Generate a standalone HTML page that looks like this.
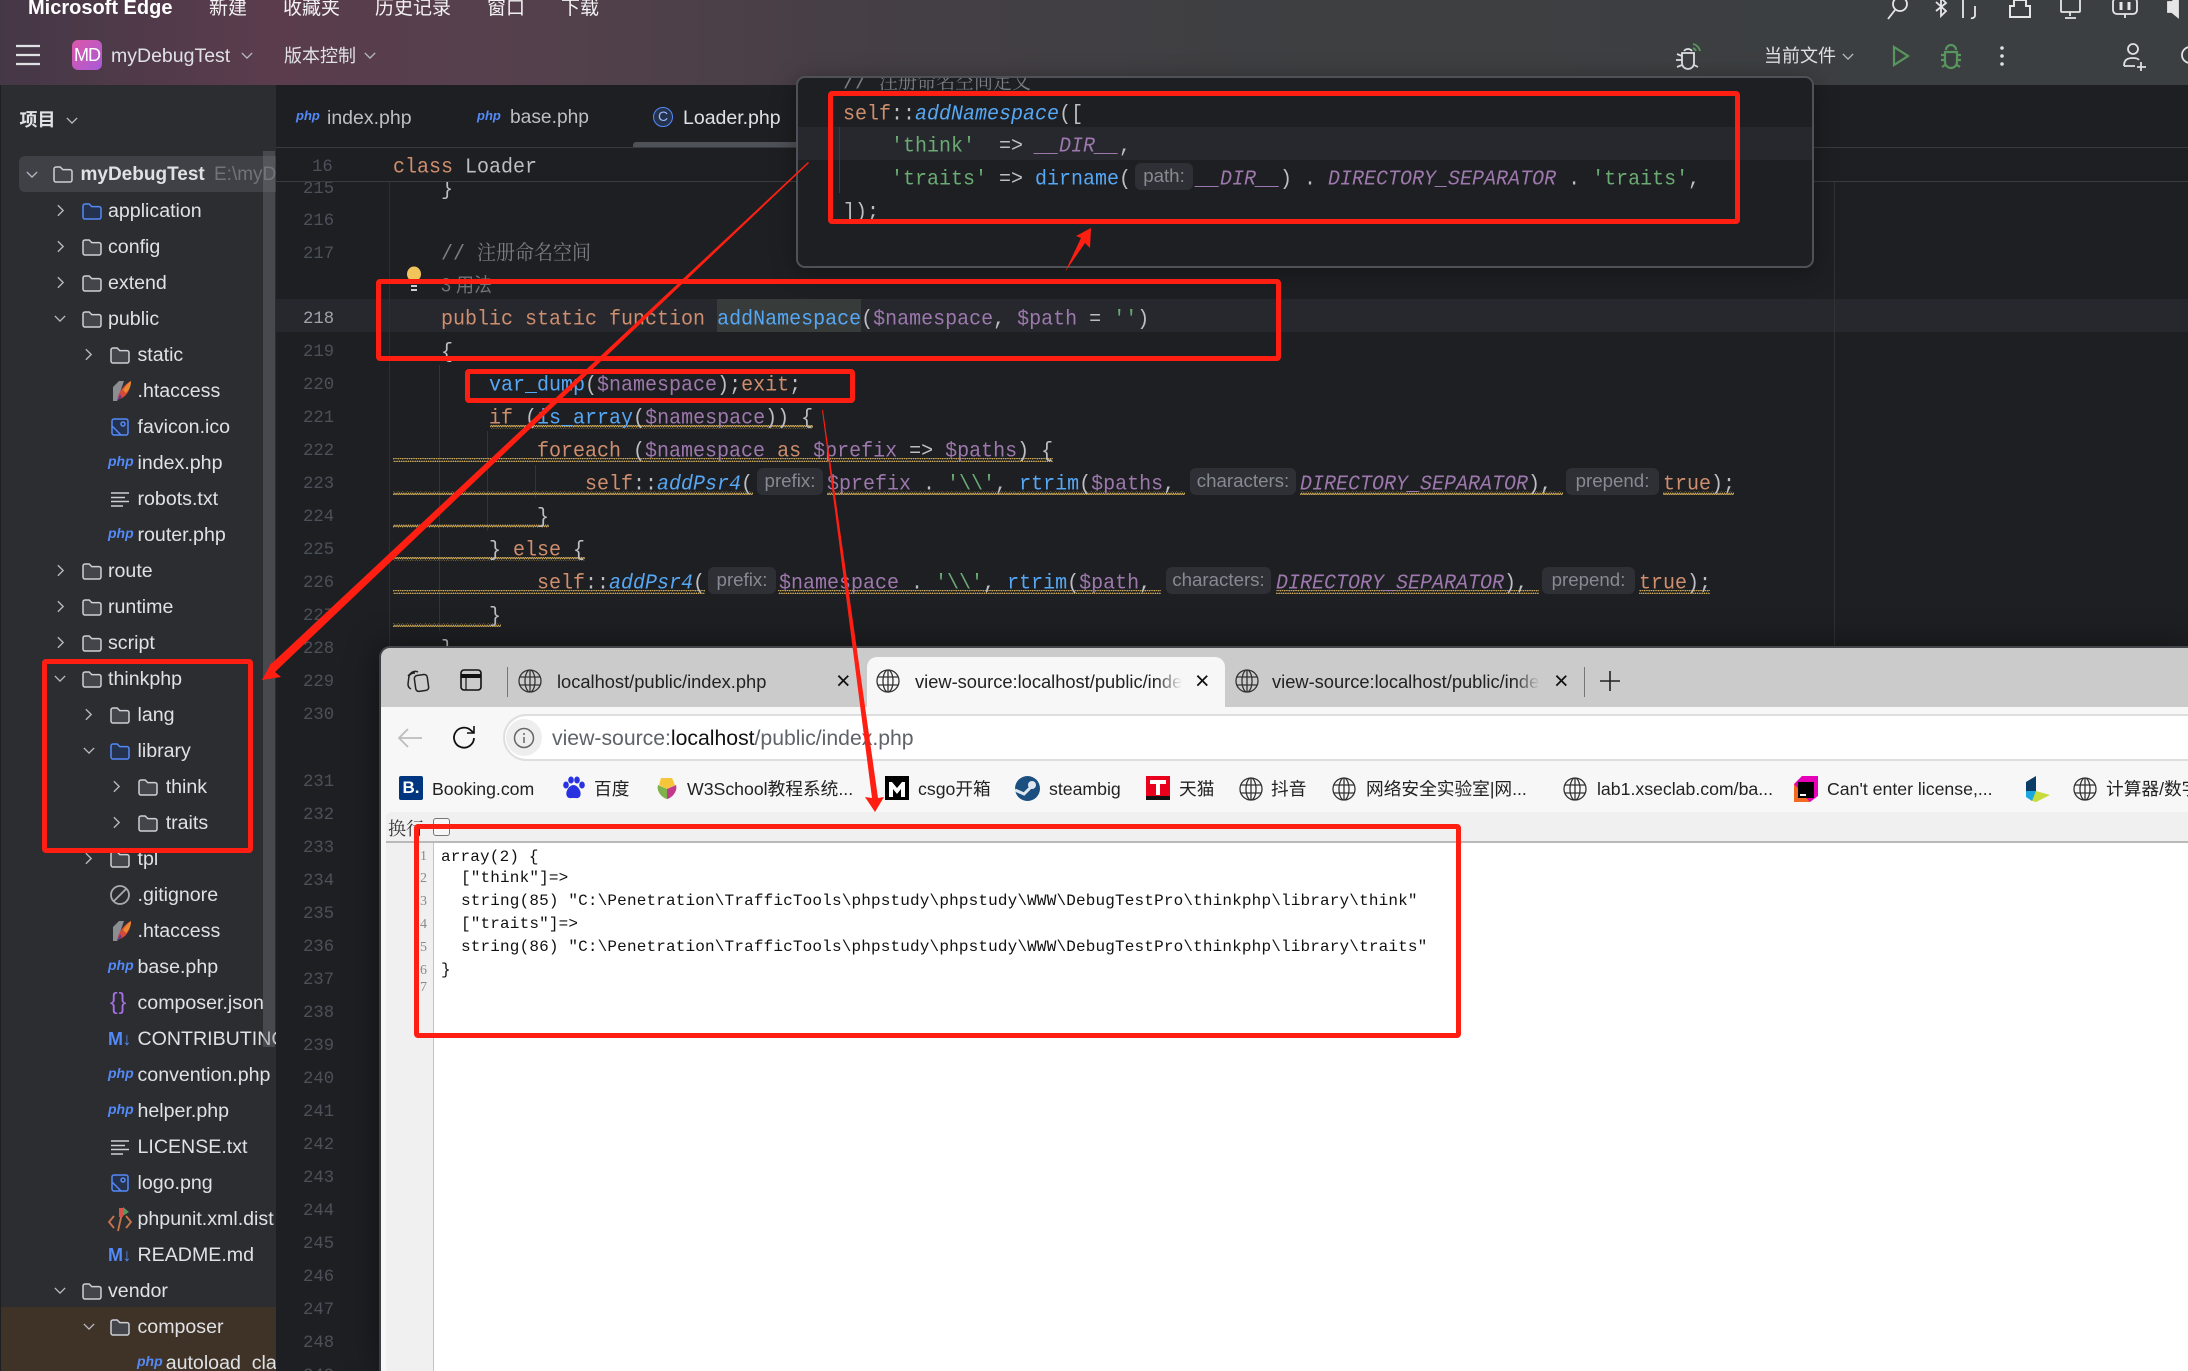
<!DOCTYPE html>
<html lang="zh">
<head>
<meta charset="utf-8">
<title>myDebugTest</title>
<style>
html,body{margin:0;padding:0;background:#1e1f22;width:2188px;height:1371px;overflow:hidden}
body{position:relative;font-family:"Liberation Sans","Noto Sans CJK SC",sans-serif}
#root{position:absolute;left:0;top:0;width:2188px;height:1371px;overflow:hidden}
.a{position:absolute}
.x{position:absolute;white-space:pre;line-height:1}
svg{position:absolute;overflow:visible}
.fo{fill:#43454a;stroke:#ced0d6;stroke-width:1.5}
.fb{fill:#25324d;stroke:#548af7;stroke-width:1.5}
.ch{fill:none;stroke:#b4b8bf;stroke-width:1.6}
.r{position:absolute;left:0;width:276px;height:36px}
.r span{position:absolute;top:0;font-size:19.6px;line-height:36px;color:#dfe1e5;white-space:pre}
.t2{left:108px}.t3{left:137.5px}.t4{left:165.7px}
.r .p{font:italic bold 14px/36px "Liberation Sans",sans-serif;color:#548af7;top:-2px}
.r .md{font:bold 18px/36px "Liberation Sans",sans-serif;color:#548af7;left:108px;letter-spacing:-.5px}
.c{position:absolute;font:20px/33px "Liberation Mono",monospace;white-space:pre;color:#bcbec4;height:33px;margin-top:3px;transform:scaleY(1.08)}
.n{position:absolute;left:303px;font:17.3px/33px "Liberation Mono",monospace;color:#4b5059;height:33px;margin-top:3px}
.k{color:#cf8e6d}.f{color:#56a8f5}.v{color:#9d78ad}.s{color:#6aab73}
.fi{color:#56a8f5;font-style:italic}.d{color:#9d78ad;font-style:italic}
.h{position:absolute;background:#2e3035;border-radius:6px;color:#868a91;font:18.7px/25px "Liberation Sans",sans-serif;text-align:center;height:27px;white-space:pre}
.rb{position:absolute;border:5px solid #fe1f12;border-radius:4px;box-sizing:border-box}
.b{position:absolute;white-space:pre;font-size:17.7px;line-height:24px;color:#222}
.src{position:absolute;left:441px;font:16px/20px "Liberation Mono","Noto Serif CJK SC",monospace;color:#111;white-space:pre;letter-spacing:.16px}
.ln{position:absolute;left:420px;font:14px/14px "Liberation Serif",serif;color:#8a8a8a}
</style>
</head>
<body>
<div id="root">
<svg width="0" height="0" style="position:absolute">
<defs>
<symbol id="fold" viewBox="0 0 20 18"><path d="M1 4a2 2 0 0 1 2-2h4.2l2.6 2.6H17a2 2 0 0 1 2 2V15a2 2 0 0 1-2 2H3a2 2 0 0 1-2-2z"/></symbol>
<symbol id="cr" viewBox="0 0 8 14"><path d="M1 1l6 6-6 6"/></symbol>
<symbol id="cd" viewBox="0 0 14 8"><path d="M1 1l6 6 6-6"/></symbol>
<symbol id="globe" viewBox="0 0 24 24"><g fill="none" stroke="#333" stroke-width="1.3"><circle cx="12" cy="12" r="11"/><ellipse cx="12" cy="12" rx="5" ry="11"/><path d="M12 1v22M2 8h20M2 16h20"/></g></symbol>
<symbol id="feather" viewBox="0 0 20 22"><path d="M1 7l6-6h5L5 21H1z" fill="#8a8d91"/><path d="M5 21C6 13 11 5 19 1c0 8-5 17-12 18z" fill="#d64a3a"/><path d="M11 10C13 7 16 3 19 1c0 5-2 9-5 12z" fill="#e98a2f"/><path d="M5 21c1-3 2-5 3-7l2 3z" fill="#6b3b8c"/></symbol>
<symbol id="img" viewBox="0 0 18 18"><g fill="none" stroke="#548af7" stroke-width="1.5"><rect x="1" y="1" width="16" height="16" rx="2" fill="#25324d"/><circle cx="12" cy="6" r="2"/><path d="M1 8l9 9"/></g></symbol>
<symbol id="txt" viewBox="0 0 18 16"><g stroke="#ced0d6" stroke-width="1.5"><path d="M0 2h18M0 6.500h14M0 10.500h18M0 15h12"/></g></symbol>
<pattern id="w" width="4.500" height="4" patternUnits="userSpaceOnUse"><path d="M0 3L1.100 1L2.250 3L3.400 1L4.500 3" fill="none" stroke="#cda956" stroke-width=".9"/></pattern>
</defs>
</svg>

<!-- title bar -->
<div class="a" style="left:0;top:0;width:2188px;height:85px;background:linear-gradient(90deg,#453846 0,#5a3c4d 12%,#56404d 22%,#453f45 40%,#3d3f41 60%,#3c3f41 100%)"></div>
<div class="x" style="left:28px;top:-2px;font-size:20px;font-weight:bold;color:#fff">Microsoft Edge</div>
<div class="x" style="left:209px;top:-1px;font-size:19px;color:#f2f2f2">新建</div>
<div class="x" style="left:283px;top:-1px;font-size:19px;color:#f2f2f2">收藏夹</div>
<div class="x" style="left:375px;top:-1px;font-size:19px;color:#f2f2f2">历史记录</div>
<div class="x" style="left:487px;top:-1px;font-size:19px;color:#f2f2f2">窗口</div>
<div class="x" style="left:561px;top:-1px;font-size:19px;color:#f2f2f2">下载</div>
<!-- tray icons -->
<svg style="left:0;top:0" width="2188" height="85" fill="none" stroke="#e6e6e6" stroke-width="1.8">
<circle cx="1900" cy="4" r="7"/><path d="M1895 10l-7 9"/>
<path d="M1936 2l10 9-5 5V-2l5 5-10 8"/>
<path d="M1963 18V0M1975 6v9a3 3 0 0 1-4 3"/>
<path d="M2010 17V6h4V0h12v6h4v11z" stroke-width="2"/>
<rect x="2061" y="-2" width="19" height="14" rx="1"/><path d="M2070 12v4M2065 18h11"/>
<rect x="2113" y="-2" width="24" height="16" rx="4"/><path d="M2121 2v8M2129 2v8" stroke-width="3"/><path d="M2125 14v4"/>
<path d="M2168 2h4l6-5v20l-6-5h-4z" fill="#e6e6e6"/>
</svg>
<!-- row 2 -->
<svg style="left:16px;top:44px" width="24" height="22" stroke="#dfe1e5" stroke-width="2.200"><path d="M0 2h24M0 11h24M0 20h24"/></svg>
<div class="a" style="left:72px;top:40px;width:30px;height:30px;border-radius:6px;background:linear-gradient(135deg,#dc58a8,#a85ad8);color:#fff;font-size:18px;letter-spacing:-1px;line-height:30px;text-align:center">MD</div>
<div class="x" style="left:111px;top:47px;font-size:19.500px;color:#dfe1e5">myDebugTest</div>
<svg class="ch" style="left:241px;top:52px" width="12" height="7"><use href="#cd"/></svg>
<div class="x" style="left:284px;top:47px;font-size:18px;color:#dfe1e5">版本控制</div>
<svg class="ch" style="left:364px;top:52px" width="12" height="7"><use href="#cd"/></svg>
<!-- debug signal icon -->
<svg style="left:1674px;top:40px" width="30" height="30" fill="none" stroke="#dfe1e5" stroke-width="1.800">
<path d="M10 11a5 5 0 0 1 8 0M8 13h12v10a6 6 0 0 1-12 0zM8 16l-5-2M8 20H2M8 25l-5 2M20 25l4 2"/>
<path d="M19 4a9 9 0 0 1 7 7M19 8a5 5 0 0 1 3 3" stroke="#57965c"/>
</svg>
<div class="x" style="left:1764px;top:47px;font-size:18px;color:#dfe1e5">当前文件</div>
<svg class="ch" style="left:1842px;top:53px" width="12" height="7"><use href="#cd"/></svg>
<svg style="left:1892px;top:45px" width="18" height="22" fill="none" stroke="#57965c" stroke-width="2.200"><path d="M2 2l14 9-14 9z"/></svg>
<svg style="left:1940px;top:44px" width="22" height="24" fill="none" stroke="#57965c" stroke-width="2.200"><path d="M6 6a5 5 0 0 1 10 0M5 8h12v10a6 6 0 0 1-12 0zM5 11H1M17 11h4M5 16H1M17 16h4M5 21l-3 2M17 21l3 2"/></svg>
<svg style="left:2000px;top:45px" width="4" height="22" fill="#dfe1e5"><circle cx="2" cy="3" r="1.800"/><circle cx="2" cy="11" r="1.800"/><circle cx="2" cy="19" r="1.800"/></svg>
<svg style="left:2121px;top:42px" width="28" height="30" fill="none" stroke="#dfe1e5" stroke-width="1.800"><circle cx="12" cy="7" r="5"/><path d="M3 24c0-6 3-8 9-8 3 0 5 .5 6 2M3 24h11M20 20v9M16 25h9"/></svg>
<svg style="left:2178px;top:44px" width="14" height="24" fill="none" stroke="#dfe1e5" stroke-width="1.800"><circle cx="12" cy="11" r="8"/></svg>

<!-- sidebar -->
<div class="a" style="left:0;top:85px;width:276px;height:1286px;background:#2b2d30;overflow:hidden;border-left:1px solid #1e1f22;box-sizing:border-box">
<div class="a" style="left:-1px;top:-85px;width:276px;height:1371px">
<div class="x" style="left:19.500px;top:111px;font-size:18px;font-weight:bold;color:#dfe1e5">项目</div>
<svg class="ch" style="left:66px;top:117px" width="12" height="7"><use href="#cd"/></svg>
<div class="a" style="left:19px;top:156px;width:260px;height:36px;background:#3f4146;border-radius:6px 0 0 6px"></div>
<svg class="ch" style="left:26px;top:171px" width="12" height="7"><use href="#cd"/></svg>
<svg class="fo" style="left:53px;top:165px" width="20" height="18" fill="#3f4146"><use href="#fold"/></svg>
<div class="x" style="left:80.500px;top:157px;font-size:19px;line-height:36px;font-weight:bold;color:#dfe1e5">myDebugTest</div>
<div class="x" style="left:214px;top:157px;font-size:19px;line-height:36px;color:#6f737a">E:\myD</div>

<div class="a" style="left:0;top:1307px;width:276px;height:64px;background:#3f3226"></div>

<div class="r" style="top:193px"><svg class="ch" style="left:57px;top:11px" width="7" height="13"><use href="#cr"/></svg><svg class="fb" style="left:82px;top:9px" width="20" height="18"><use href="#fold"/></svg><span class="t2">application</span></div>
<div class="r" style="top:229px"><svg class="ch" style="left:57px;top:11px" width="7" height="13"><use href="#cr"/></svg><svg class="fo" style="left:82px;top:9px" width="20" height="18"><use href="#fold"/></svg><span class="t2">config</span></div>
<div class="r" style="top:265px"><svg class="ch" style="left:57px;top:11px" width="7" height="13"><use href="#cr"/></svg><svg class="fo" style="left:82px;top:9px" width="20" height="18"><use href="#fold"/></svg><span class="t2">extend</span></div>
<div class="r" style="top:301px"><svg class="ch" style="left:54px;top:14px" width="12" height="7"><use href="#cd"/></svg><svg class="fo" style="left:82px;top:9px" width="20" height="18"><use href="#fold"/></svg><span class="t2">public</span></div>
<div class="r" style="top:337px"><svg class="ch" style="left:85px;top:11px" width="7" height="13"><use href="#cr"/></svg><svg class="fo" style="left:110px;top:9px" width="20" height="18"><use href="#fold"/></svg><span class="t3">static</span></div>
<div class="r" style="top:373px"><svg style="left:112px;top:7px" width="20" height="22"><use href="#feather"/></svg><span class="t3">.htaccess</span></div>
<div class="r" style="top:409px"><svg style="left:111px;top:9px" width="18" height="18"><use href="#img"/></svg><span class="t3">favicon.ico</span></div>
<div class="r" style="top:445px"><span class="p" style="left:108px">php</span><span class="t3">index.php</span></div>
<div class="r" style="top:481px"><svg style="left:111px;top:10px" width="18" height="16"><use href="#txt"/></svg><span class="t3">robots.txt</span></div>
<div class="r" style="top:517px"><span class="p" style="left:108px">php</span><span class="t3">router.php</span></div>
<div class="r" style="top:553px"><svg class="ch" style="left:57px;top:11px" width="7" height="13"><use href="#cr"/></svg><svg class="fo" style="left:82px;top:9px" width="20" height="18"><use href="#fold"/></svg><span class="t2">route</span></div>
<div class="r" style="top:589px"><svg class="ch" style="left:57px;top:11px" width="7" height="13"><use href="#cr"/></svg><svg class="fo" style="left:82px;top:9px" width="20" height="18"><use href="#fold"/></svg><span class="t2">runtime</span></div>
<div class="r" style="top:625px"><svg class="ch" style="left:57px;top:11px" width="7" height="13"><use href="#cr"/></svg><svg class="fo" style="left:82px;top:9px" width="20" height="18"><use href="#fold"/></svg><span class="t2">script</span></div>
<div class="r" style="top:661px"><svg class="ch" style="left:54px;top:14px" width="12" height="7"><use href="#cd"/></svg><svg class="fo" style="left:82px;top:9px" width="20" height="18"><use href="#fold"/></svg><span class="t2">thinkphp</span></div>
<div class="r" style="top:697px"><svg class="ch" style="left:85px;top:11px" width="7" height="13"><use href="#cr"/></svg><svg class="fo" style="left:110px;top:9px" width="20" height="18"><use href="#fold"/></svg><span class="t3">lang</span></div>
<div class="r" style="top:733px"><svg class="ch" style="left:83px;top:14px" width="12" height="7"><use href="#cd"/></svg><svg class="fb" style="left:110px;top:9px" width="20" height="18"><use href="#fold"/></svg><span class="t3">library</span></div>
<div class="r" style="top:769px"><svg class="ch" style="left:113px;top:11px" width="7" height="13"><use href="#cr"/></svg><svg class="fo" style="left:138px;top:9px" width="20" height="18"><use href="#fold"/></svg><span class="t4">think</span></div>
<div class="r" style="top:805px"><svg class="ch" style="left:113px;top:11px" width="7" height="13"><use href="#cr"/></svg><svg class="fo" style="left:138px;top:9px" width="20" height="18"><use href="#fold"/></svg><span class="t4">traits</span></div>
<div class="r" style="top:841px"><svg class="ch" style="left:85px;top:11px" width="7" height="13"><use href="#cr"/></svg><svg class="fo" style="left:110px;top:9px" width="20" height="18"><use href="#fold"/></svg><span class="t3">tpl</span></div>
<div class="r" style="top:877px"><svg style="left:110px;top:8px" width="20" height="20" fill="none" stroke="#a8abb0" stroke-width="1.800"><circle cx="10" cy="10" r="9"/><path d="M3.500 16.500L16.500 3.500"/></svg><span class="t3">.gitignore</span></div>
<div class="r" style="top:913px"><svg style="left:112px;top:7px" width="20" height="22"><use href="#feather"/></svg><span class="t3">.htaccess</span></div>
<div class="r" style="top:949px"><span class="p" style="left:108px">php</span><span class="t3">base.php</span></div>
<div class="r" style="top:985px"><span style="left:110px;top:-2px;font-size:23px;color:#a571e6;letter-spacing:1px">{}</span><span class="t3">composer.json</span></div>
<div class="r" style="top:1021px"><span class="md">M↓</span><span class="t3">CONTRIBUTING.md</span></div>
<div class="r" style="top:1057px"><span class="p" style="left:108px">php</span><span class="t3">convention.php</span></div>
<div class="r" style="top:1093px"><span class="p" style="left:108px">php</span><span class="t3">helper.php</span></div>
<div class="r" style="top:1129px"><svg style="left:111px;top:10px" width="18" height="16"><use href="#txt"/></svg><span class="t3">LICENSE.txt</span></div>
<div class="r" style="top:1165px"><svg style="left:111px;top:9px" width="18" height="18"><use href="#img"/></svg><span class="t3">logo.png</span></div>
<div class="r" style="top:1201px"><svg style="left:108px;top:6px" width="24" height="24" fill="none" stroke="#c9764d" stroke-width="1.800"><path d="M6 9l-5 6 5 6M18 9l5 6-5 6M14 6l-4 18"/><path d="M11 1h4v9h-4z" fill="#d9534a" stroke="none"/><path d="M15 0l6 5-6 4z" fill="#57965c" stroke="none"/></svg><span class="t3">phpunit.xml.dist</span></div>
<div class="r" style="top:1237px"><span class="md">M↓</span><span class="t3">README.md</span></div>
<div class="r" style="top:1273px"><svg class="ch" style="left:54px;top:14px" width="12" height="7"><use href="#cd"/></svg><svg class="fo" style="left:82px;top:9px" width="20" height="18"><use href="#fold"/></svg><span class="t2">vendor</span></div>
<div class="r" style="top:1309px"><svg class="ch" style="left:83px;top:14px" width="12" height="7"><use href="#cd"/></svg><svg class="fo" style="left:110px;top:9px" width="20" height="18"><use href="#fold"/></svg><span class="t3">composer</span></div>
<div class="r" style="top:1345px"><span class="p" style="left:137px">php</span><span class="t4">autoload_classmap.php</span></div>

<div class="a" style="left:263px;top:151px;width:12px;height:896px;background:rgba(120,122,128,.38)"></div>
</div>
</div>

<!-- editor tabs -->
<div class="x" style="left:296px;top:108px;font:italic bold 13px/16px 'Liberation Sans',sans-serif;color:#548af7">php</div>
<div class="x" style="left:327px;top:108px;font-size:19.500px;line-height:20px;color:#bcbec4">index.php</div>
<div class="x" style="left:477px;top:108px;font:italic bold 13px/16px 'Liberation Sans',sans-serif;color:#548af7">php</div>
<div class="x" style="left:510px;top:108px;font-size:19.200px;line-height:20px;color:#bcbec4">base.php</div>
<div class="a" style="left:653px;top:107px;width:20px;height:20px;border:1.800px solid #548af7;border-radius:50%;box-sizing:border-box;background:#25324d;color:#9bbcf9;font-size:14px;line-height:16px;text-align:center">C</div>
<div class="x" style="left:683px;top:108px;font-size:19.500px;line-height:20px;color:#dfe1e5">Loader.php</div>
<div class="a" style="left:276px;top:147px;width:1912px;height:1px;background:#393b40"></div>
<div class="a" style="left:633px;top:142px;width:170px;height:5px;background:#4e5157;border-radius:3px 0 0 0"></div>

<!-- gutter lines & highlights -->
<div class="a" style="left:276px;top:299px;width:1912px;height:33px;background:#26282e"></div>
<div class="a" style="left:717px;top:299px;width:144px;height:33px;background:#373b39"></div>
<div class="a" style="left:389px;top:181px;width:1px;height:1190px;background:#2c2e32"></div>
<div class="a" style="left:439px;top:365px;width:1px;height:266px;background:#313438"></div>
<div class="a" style="left:487px;top:431px;width:1px;height:100px;background:#313438"></div>
<div class="a" style="left:535px;top:465px;width:1px;height:33px;background:#313438"></div>
<div class="a" style="left:1834px;top:181px;width:1px;height:1190px;background:#2f3135"></div>

<!-- wavy underlines -->
<svg style="left:0;top:0" width="2188" height="1371">
<rect x="490" y="425" width="323" height="4" fill="url(#w)"/>
<rect x="393" y="458" width="660" height="4" fill="url(#w)"/>
<rect x="393" y="491" width="360" height="4" fill="url(#w)"/>
<rect x="827" y="491" width="358" height="4" fill="url(#w)"/>
<rect x="1300" y="491" width="263" height="4" fill="url(#w)"/>
<rect x="1663" y="491" width="71" height="4" fill="url(#w)"/>
<rect x="393" y="524" width="156" height="4" fill="url(#w)"/>
<rect x="393" y="557" width="192" height="4" fill="url(#w)"/>
<rect x="393" y="590" width="312" height="4" fill="url(#w)"/>
<rect x="778" y="590" width="383" height="4" fill="url(#w)"/>
<rect x="1276" y="590" width="263" height="4" fill="url(#w)"/>
<rect x="1639" y="590" width="71" height="4" fill="url(#w)"/>
<rect x="393" y="623" width="108" height="4" fill="url(#w)"/>
</svg>

<!-- line numbers -->
<div class="n" style="top:170px">215</div>
<div class="n" style="top:202px">216</div>
<div class="n" style="top:235px">217</div>
<div class="n" style="top:300px;color:#a1a3ab">218</div>
<div class="n" style="top:333px">219</div>
<div class="n" style="top:366px">220</div>
<div class="n" style="top:399px">221</div>
<div class="n" style="top:432px">222</div>
<div class="n" style="top:465px">223</div>
<div class="n" style="top:498px">224</div>
<div class="n" style="top:531px">225</div>
<div class="n" style="top:564px">226</div>
<div class="n" style="top:597px">227</div>
<div class="n" style="top:630px">228</div>
<div class="n" style="top:663px">229</div>
<div class="n" style="top:696px">230</div>
<div class="n" style="top:763px">231</div>
<div class="n" style="top:796px">232</div>
<div class="n" style="top:829px">233</div>
<div class="n" style="top:862px">234</div>
<div class="n" style="top:895px">235</div>
<div class="n" style="top:928px">236</div>
<div class="n" style="top:961px">237</div>
<div class="n" style="top:994px">238</div>
<div class="n" style="top:1027px">239</div>
<div class="n" style="top:1060px">240</div>
<div class="n" style="top:1093px">241</div>
<div class="n" style="top:1126px">242</div>
<div class="n" style="top:1159px">243</div>
<div class="n" style="top:1192px">244</div>
<div class="n" style="top:1225px">245</div>
<div class="n" style="top:1258px">246</div>
<div class="n" style="top:1291px">247</div>
<div class="n" style="top:1324px">248</div>
<div class="n" style="top:1357px">249</div>

<!-- code -->
<div class="c" style="left:441px;top:170px">}</div>
<div class="c" style="left:441px;top:235px;margin-top:0;color:#7a7e85">// <span style="font-family:'Noto Serif CJK SC',serif;font-size:19px">注册命名空间</span></div>
<div class="c" style="left:441px;top:269px;margin-top:0;color:#6f737a;font-family:'Liberation Sans','Noto Sans CJK SC',sans-serif;font-size:18px">3 用法</div>
<div class="c" style="left:441px;top:300px"><span class="k">public static function</span> <span class="f">addNamespace</span>(<span class="v">$namespace</span>, <span class="v">$path</span> = <span class="s">''</span>)</div>
<div class="c" style="left:441px;top:333px">{</div>
<div class="c" style="left:489px;top:366px"><span class="f">var_dump</span>(<span class="v">$namespace</span>);<span class="k">exit</span>;</div>
<div class="c" style="left:489px;top:399px"><span class="k">if</span> (<span class="f">is_array</span>(<span class="v">$namespace</span>)) {</div>
<div class="c" style="left:537px;top:432px"><span class="k">foreach</span> (<span class="v">$namespace</span> <span class="k">as</span> <span class="v">$prefix</span> =&gt; <span class="v">$paths</span>) {</div>
<div class="c" style="left:585px;top:465px"><span class="k">self</span>::<span class="fi">addPsr4</span>(</div>
<div class="h" style="left:757px;top:468px;width:66px">prefix:</div>
<div class="c" style="left:827px;top:465px"><span class="v">$prefix</span> . <span class="s">'\\'</span>, <span class="f">rtrim</span>(<span class="v">$paths</span>,</div>
<div class="h" style="left:1190px;top:468px;width:106px">characters:</div>
<div class="c" style="left:1300px;top:465px"><span class="d">DIRECTORY_SEPARATOR</span>),</div>
<div class="h" style="left:1566px;top:468px;width:93px">prepend:</div>
<div class="c" style="left:1663px;top:465px"><span class="k">true</span>);</div>
<div class="c" style="left:537px;top:498px">}</div>
<div class="c" style="left:489px;top:531px">} <span class="k">else</span> {</div>
<div class="c" style="left:537px;top:564px"><span class="k">self</span>::<span class="fi">addPsr4</span>(</div>
<div class="h" style="left:708px;top:567px;width:68px">prefix:</div>
<div class="c" style="left:779px;top:564px"><span class="v">$namespace</span> . <span class="s">'\\'</span>, <span class="f">rtrim</span>(<span class="v">$path</span>,</div>
<div class="h" style="left:1166px;top:567px;width:105px">characters:</div>
<div class="c" style="left:1276px;top:564px"><span class="d">DIRECTORY_SEPARATOR</span>),</div>
<div class="h" style="left:1542px;top:567px;width:93px">prepend:</div>
<div class="c" style="left:1639px;top:564px"><span class="k">true</span>);</div>
<div class="c" style="left:489px;top:597px">}</div>
<div class="c" style="left:441px;top:630px">}</div>

<!-- bulb -->
<svg style="left:405px;top:266px" width="18" height="26"><ellipse cx="9" cy="8" r="7" rx="7" ry="7.500" fill="#f2c55c"/><rect x="5" y="14" width="8" height="2" fill="#f2c55c"/><rect x="6" y="19" width="6" height="2" fill="#ced0d6"/><rect x="6" y="23" width="6" height="2" fill="#ced0d6"/></svg>

<!-- sticky -->
<div class="a" style="left:276px;top:148px;width:1912px;height:33px;background:#1e1f22;border-bottom:1px solid #393b40"></div>
<div class="n" style="left:312px;top:149px;margin-top:2px">16</div>
<div class="c" style="left:393px;top:149px;margin-top:2px"><span class="k">class</span> Loader</div>

<!-- popup -->
<div class="a" style="left:796px;top:76px;width:1018px;height:192px;box-sizing:border-box;border:2px solid #4e5157;border-radius:9px;background:#1e1f22;overflow:hidden;box-shadow:0 4px 24px rgba(0,0,0,.35)">
<div class="a" style="left:-798px;top:-78px;width:2188px;height:1371px">
<div class="a" style="left:796px;top:127px;width:1018px;height:33px;background:#26282e"></div>
<div class="a" style="left:839px;top:127px;width:1px;height:66px;background:#393b40"></div>
<div class="c" style="left:843px;top:64px;margin-top:0;color:#7a7e85">// <span style="font-family:'Noto Serif CJK SC',serif;font-size:19px">注册命名空间定义</span></div>
<div class="c" style="left:843px;top:95px"><span class="k">self</span>::<span class="fi">addNamespace</span>([</div>
<div class="c" style="left:891px;top:127px"><span class="s">'think'</span>  =&gt; <span class="d">__DIR__</span>,</div>
<div class="c" style="left:891px;top:160px"><span class="s">'traits'</span> =&gt; <span class="f">dirname</span>(</div>
<div class="h" style="left:1135px;top:163px;width:58px">path:</div>
<div class="c" style="left:1196px;top:160px"><span class="d">__DIR__</span>) . <span class="d">DIRECTORY_SEPARATOR</span> . <span class="s">'traits'</span>,</div>
<div class="c" style="left:843px;top:193px">]);</div>
</div>
</div>

<!-- browser window -->
<div class="a" style="left:379px;top:646px;width:1809px;height:725px;background:#cbcbcb;border-top:2px solid #43454a;border-left:2px solid #3c3e42;border-radius:11px 0 0 0;box-sizing:border-box;box-shadow:0 0 34px rgba(0,0,0,.45)"></div>
<div class="a" style="left:381px;top:707px;width:1807px;height:664px;background:#f7f7f7"></div>
<svg style="left:405px;top:668px" width="24" height="26" fill="none" stroke="#222" stroke-width="1.500"><rect x="10" y="7" width="13" height="16" rx="3" transform="rotate(-8 16 15)"/><path d="M10 5c-3 0-5 1-6 3l-1 8c0 2 1 4 3 5M13 4c-2-1-5-1-7 1l-3 3"/></svg>
<svg style="left:460px;top:669px" width="22" height="22" fill="none" stroke="#111" stroke-width="1.600"><rect x="1" y="1" width="20" height="20" rx="3"/><path d="M1 7h20" stroke-width="4"/><path d="M6 7v14" stroke-width="1.200"/></svg>
<div class="a" style="left:507px;top:667px;width:1px;height:30px;background:#777"></div>
<svg style="left:518px;top:669px" width="24" height="24"><use href="#globe"/></svg>
<div class="x" style="left:557px;top:672px;font-size:18.300px;line-height:20px;color:#222">localhost/public/index.php</div>
<div class="x" style="left:836px;top:669px;font-size:25px;line-height:24px;color:#111">×</div>
<div class="a" style="left:867px;top:657px;width:358px;height:50px;background:#f7f7f7;border-radius:10px 10px 0 0"></div>
<svg style="left:876px;top:669px" width="24" height="24"><use href="#globe"/></svg>
<div class="a" style="left:915px;top:672px;width:267px;height:20px;overflow:hidden"><div class="x" style="left:0;top:0;font-size:18.300px;line-height:20px;color:#222">view-source:localhost/public/index.php</div><div class="a" style="right:0;top:0;width:26px;height:20px;background:linear-gradient(90deg,rgba(247,247,247,0),#f7f7f7)"></div></div>
<div class="x" style="left:1195px;top:669px;font-size:25px;line-height:24px;color:#111">×</div>
<svg style="left:1235px;top:669px" width="24" height="24"><use href="#globe"/></svg>
<div class="a" style="left:1272px;top:672px;width:268px;height:20px;overflow:hidden"><div class="x" style="left:0;top:0;font-size:18.300px;line-height:20px;color:#222">view-source:localhost/public/index.php</div><div class="a" style="right:0;top:0;width:26px;height:20px;background:linear-gradient(90deg,rgba(203,203,203,0),#cbcbcb)"></div></div>
<div class="x" style="left:1554px;top:669px;font-size:25px;line-height:24px;color:#111">×</div>
<div class="a" style="left:1584px;top:667px;width:1px;height:30px;background:#777"></div>
<svg style="left:1600px;top:671px" width="20" height="20" stroke="#222" stroke-width="1.600"><path d="M10 0v20M0 10h20"/></svg>

<!-- toolbar -->
<svg style="left:397px;top:727px" width="26" height="22" fill="none" stroke="#bdbdbd" stroke-width="1.800"><path d="M25 11H2M11 2l-9 9 9 9"/></svg>
<svg style="left:452px;top:725px" width="26" height="26" fill="none" stroke="#111" stroke-width="1.800"><path d="M22 13a10 10 0 1 1-3-7.500L22 8"/><path d="M22 1v7h-7" stroke-width="1.600"/></svg>
<div class="a" style="left:503px;top:714px;width:1700px;height:47px;box-sizing:border-box;background:#fff;border:2px solid #dedede;border-radius:24px 0 0 24px"></div>
<div class="a" style="left:506px;top:719px;width:36px;height:37px;background:#eeeeee;border-radius:50%"></div>
<svg style="left:513px;top:727px" width="22" height="22" fill="none" stroke="#666" stroke-width="1.500"><circle cx="11" cy="11" r="9.500"/><path d="M11 10v6M11 6v2"/></svg>
<div class="x" style="left:552px;top:727px;font-size:21.200px;line-height:24px;color:#5f6368">view-source:<span style="color:#111">localhost</span>/public/index.php</div>

<!-- bookmarks -->
<div class="a" style="left:399px;top:776px;width:24px;height:24px;background:#003580;border-radius:2px;color:#fff;font:bold 17px/24px 'Liberation Sans',sans-serif;text-align:center">B.</div>
<div class="b" style="left:432px;top:777px">Booking.com</div>
<svg style="left:562px;top:776px" width="23" height="24" fill="#2932e1"><ellipse cx="4" cy="9" rx="2.800" ry="3.500"/><ellipse cx="9" cy="4" rx="2.800" ry="3.500"/><ellipse cx="15" cy="4" rx="2.800" ry="3.500"/><ellipse cx="20" cy="9" rx="2.800" ry="3.500"/><path d="M11.500 9c4 0 8 6 7 10-1 4-4 3-7 3s-6 1-7-3c-1-4 3-10 7-10z"/></svg>
<div class="b" style="left:594px;top:777px">百度</div>
<svg style="left:655px;top:776px" width="24" height="24"><path d="M6 2h11l3 7-8 4-8-4z" fill="#f5c63a"/><path d="M3 9l9 4v10C7 22 1 15 3 9z" fill="#7fb24a"/><path d="M21 9l-9 4v10c5-1 11-8 9-14z" fill="#c23a8a"/></svg>
<div class="b" style="left:687px;top:777px">W3School教程系统...</div>
<svg style="left:885px;top:776px" width="24" height="24"><rect width="24" height="24" fill="#000"/><path d="M4 21V6h3l5 6 5-6h3v15h-4v-8l-4 5-4-5v8z" fill="#fff"/></svg>
<div class="b" style="left:918px;top:777px">csgo开箱</div>
<svg style="left:1015px;top:776px" width="25" height="25"><circle cx="12.500" cy="12.500" r="12.500" fill="#1b4f80"/><path d="M0 14l9 4 8-8" stroke="#dfe8f0" stroke-width="3" fill="none"/><circle cx="17" cy="9" r="4" fill="#dfe8f0"/></svg>
<div class="b" style="left:1049px;top:777px">steambig</div>
<svg style="left:1146px;top:776px" width="24" height="24"><rect width="24" height="24" fill="#e8001c"/><rect y="20" width="24" height="4" fill="#111"/><path d="M4 4h16v4h-6v11h-4V8H4z" fill="#fff"/></svg>
<div class="b" style="left:1179px;top:777px">天猫</div>
<svg style="left:1239px;top:777px" width="24" height="24"><use href="#globe"/></svg>
<div class="b" style="left:1271px;top:777px">抖音</div>
<svg style="left:1332px;top:777px" width="24" height="24"><use href="#globe"/></svg>
<div class="b" style="left:1366px;top:777px">网络安全实验室|网...</div>
<svg style="left:1563px;top:777px" width="24" height="24"><use href="#globe"/></svg>
<div class="b" style="left:1597px;top:777px">lab1.xseclab.com/ba...</div>
<svg style="left:1794px;top:776px" width="24" height="26"><path d="M8 0h16v20l-8 6H0V8z" fill="#e600b8"/><path d="M0 8v18h16z" fill="#f26a21"/><rect x="4" y="6" width="16" height="16" fill="#000"/><rect x="6" y="18" width="6" height="2" fill="#fff"/></svg>
<div class="b" style="left:1827px;top:777px">Can't enter license,...</div>
<svg style="left:2026px;top:776px" width="24" height="26"><path d="M10 0v15H0V6z" fill="#0b3d66"/><path d="M0 15h10l4 4-8 6-6-4z" fill="#1aa7e0"/><path d="M10 15l14 4-14 7-4-1z" fill="#c6dc3a"/></svg>
<svg style="left:2073px;top:777px" width="24" height="24"><use href="#globe"/></svg>
<div class="b" style="left:2106px;top:777px">计算器/数字转换</div>

<!-- view source toolbar -->
<div class="a" style="left:386px;top:812px;width:1802px;height:31px;box-sizing:border-box;background:#f0f0f0;border-bottom:2px solid #b9b9b9;border-radius:6px 0 0 0"></div>
<div class="x" style="left:388px;top:818px;font:18px/20px 'Noto Serif CJK SC',serif;color:#333">换行</div>
<div class="a" style="left:433px;top:818px;width:17px;height:18px;box-sizing:border-box;background:#f7f7f7;border:1.500px solid #777;border-radius:3px"></div>
<!-- source pane -->
<div class="a" style="left:386px;top:843px;width:47px;height:528px;background:#f0f0f0"></div>
<div class="a" style="left:433px;top:843px;width:1px;height:528px;background:#c4c4c4"></div>
<div class="a" style="left:434px;top:843px;width:1754px;height:528px;background:#fff"></div>
<div class="ln" style="top:850px">1</div>
<div class="ln" style="top:872px">2</div>
<div class="ln" style="top:895px">3</div>
<div class="ln" style="top:918px">4</div>
<div class="ln" style="top:941px">5</div>
<div class="ln" style="top:964px">6</div>
<div class="ln" style="top:981px">7</div>
<div class="src" style="top:847px">array(2) {</div>
<div class="src" style="top:868px;left:461px">["think"]=&gt;</div>
<div class="src" style="top:891px;left:461px">string(85) "C:\Penetration\TrafficTools\phpstudy\phpstudy\WWW\DebugTestPro\thinkphp\library\think"</div>
<div class="src" style="top:914px;left:461px">["traits"]=&gt;</div>
<div class="src" style="top:937px;left:461px">string(86) "C:\Penetration\TrafficTools\phpstudy\phpstudy\WWW\DebugTestPro\thinkphp\library\traits"</div>
<div class="src" style="top:960px">}</div>

<!-- red annotations -->
<div class="rb" style="left:828px;top:91px;width:912px;height:133px"></div>
<div class="rb" style="left:376px;top:279px;width:905px;height:82px"></div>
<div class="rb" style="left:465px;top:369px;width:390px;height:34px"></div>
<div class="rb" style="left:42px;top:659px;width:211px;height:194px"></div>
<div class="rb" style="left:414px;top:824px;width:1047px;height:214px"></div>
<svg style="left:0;top:0" width="2188" height="1371" fill="#fe1f12">
<polygon points="1091,228 1076,236 1081,238 1065,272 1085,243 1090,248"/>
<polygon points="808,162 809,163 275,672 281,677 262,680 273,660 269,666"/>
<polygon points="822,410 823,410 878,798 884,797 875,812 865,797 872,798"/>
</svg>
</div>
</body>
</html>
